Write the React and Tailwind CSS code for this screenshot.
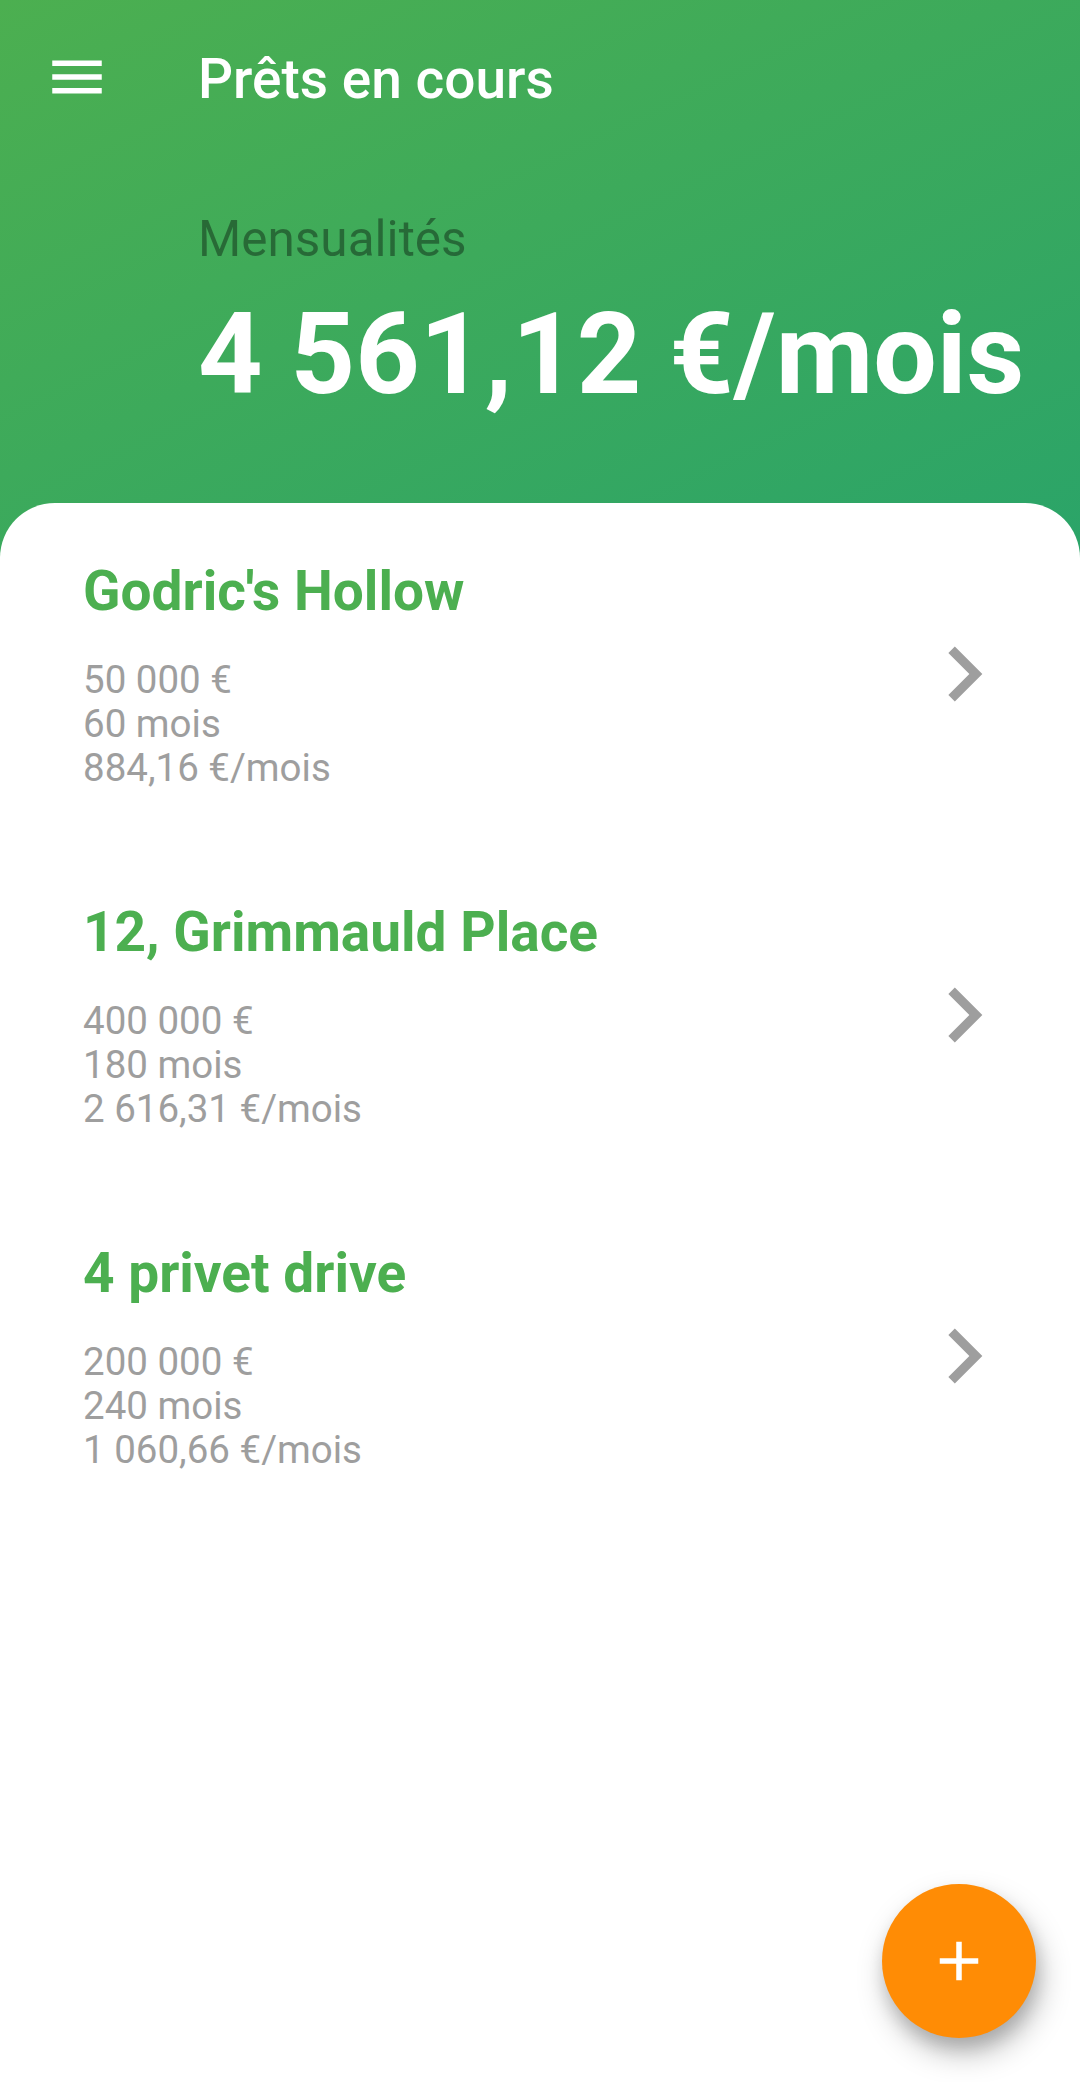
const loans = [
  { name: "Godric's Hollow", lines: ["50 000 €", "60 mois", "884,16 €/mois"] },
  { name: "12, Grimmauld Place", lines: ["400 000 €", "180 mois", "2 616,31 €/mois"] },
  { name: "4 privet drive", lines: ["200 000 €", "240 mois", "1 060,66 €/mois"] },
];

function Loan({ name, lines }) {
  return (
    <li className="flex h-[341px] items-start justify-between pr-[61.5px] pl-[83px]">
      <div>
        <h2 className="text-[55px] leading-[64px] font-bold text-[#4caf50]">{name}</h2>
        <div className="mt-[35px] text-[38.5px] leading-[44px] text-[#9e9e9e]">
          {lines.map((l) => <p key={l}>{l}</p>)}
        </div>
      </div>
      <svg className="mt-[60px] size-[110px]" viewBox="0 0 24 24" fill="#9e9e9e">
        <path d="M10 6L8.59 7.41 13.17 12l-4.58 4.59L10 18l6-6z" />
      </svg>
    </li>
  );
}

export default function App() {
  return (
    <div className="relative h-[2082px] w-[1080px] overflow-hidden bg-[linear-gradient(154.8deg,#4caf50,#009688)] bg-[length:1080px_1908px] bg-no-repeat font-['Roboto',sans-serif]">
      <header className="h-[503px]">
        <div className="flex h-[154px] items-center">
          <svg className="ml-[44px] size-[66px]" viewBox="0 0 24 24" fill="#fff"><path d="M3 18h18v-2H3v2zm0-5h18v-2H3v2zm0-7v2h18V6H3z" /></svg>
          <h1 className="mt-[3px] ml-[88px] text-[55px] leading-[64px] font-medium text-white">Prêts en cours</h1>
        </div>
        <div className="pt-[56px] pl-[198px]">
          <p className="text-[49.5px] leading-[58px] text-black/38">Mensualités</p>
          <p className="mt-[19px] text-[112.6px] leading-[136px] font-bold whitespace-nowrap text-white">4 561,12 €/mois</p>
        </div>
      </header>
      <main className="h-[1579px] rounded-t-[55px] bg-white pt-[56px]">
        <ul>{loans.map((l) => <Loan key={l.name} {...l} />)}</ul>
      </main>
      <button className="absolute top-[1884px] left-[882px] flex size-[154px] items-center justify-center rounded-full bg-[#ff8c05] shadow-[5px_16px_30px_rgba(0,0,0,0.25),2px_10px_16px_rgba(0,0,0,0.14)]">
        <svg className="size-[66px]" viewBox="0 0 24 24" fill="#fff"><path d="M19 13h-6v6h-2v-6H5v-2h6V5h2v6h6v2z" /></svg>
      </button>
    </div>
  );
}
